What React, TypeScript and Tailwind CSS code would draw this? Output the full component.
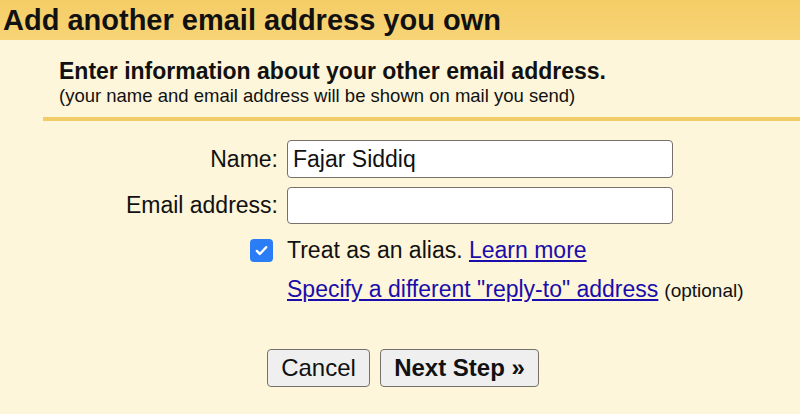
export default function App() {
  return (
    <div className="w-[800px] h-[414px] overflow-hidden bg-[#fdf6da] font-['Liberation_Sans',Arial,sans-serif] text-[#111]">
      <div className="h-[40px] bg-gradient-to-b from-[#f5cd66] to-[#f7d476] pl-[3px] flex items-center">
        <h1 className="text-[29px] font-bold leading-none">
          Add another email address you own
        </h1>
      </div>

      <div className="pl-[59px] pt-[18px]">
        <p className="text-[23px] font-bold leading-[26px]">
          Enter information about your other email address.
        </p>
        <p className="text-[18.5px] leading-[23px]">
          (your name and email address will be shown on mail you send)
        </p>
      </div>
      <div className="ml-[43px] mt-[10px] h-[4px] bg-[#f1cd6a]" />

      <div className="mt-[19px] flex flex-col gap-[9px]">
        <div className="flex items-center gap-[9px]">
          <label className="w-[278px] text-right text-[23px]">Name:</label>
          <input
            defaultValue="Fajar Siddiq"
            className="w-[386px] h-[38px] bg-white border-[1.5px] border-[#76716a] rounded-[4px] px-[5px] text-[23px] outline-none"
          />
        </div>
        <div className="flex items-center gap-[9px]">
          <label className="w-[278px] text-right text-[23px]">Email address:</label>
          <input className="w-[386px] h-[37px] bg-white border-[1.5px] border-[#76716a] rounded-[4px] px-[5px] text-[23px] outline-none" />
        </div>
      </div>

      <div className="mt-[13px] ml-[250px] h-[26px] flex items-center gap-[14px]">
        <span className="w-[23px] h-[23px] rounded-[4px] bg-[#2a7df4] flex items-center justify-center">
          <svg width="15" height="15" viewBox="0 0 16 16" fill="none">
            <path d="M3 8.5l3.2 3.2L13 4.5" stroke="white" strokeWidth="2.6" strokeLinecap="round" strokeLinejoin="round" />
          </svg>
        </span>
        <span className="text-[23px] leading-[26px]">
          Treat as an alias.{" "}
          <a href="#" className="text-[#1a0dab] underline">Learn more</a>
        </span>
      </div>

      <div className="mt-[13px] ml-[287px] h-[26px] flex items-baseline gap-[6px]">
        <a href="#" className="text-[23px] leading-[26px] text-[#1a0dab] underline">
          Specify a different "reply-to" address
        </a>
        <span className="text-[19px]">(optional)</span>
      </div>

      <div className="mt-[47px] ml-[267px] flex gap-[10px]">
        <button className="w-[103px] h-[38px] bg-[#efefef] border-[1.5px] border-[#76716a] rounded-[4px] text-[24px]">
          Cancel
        </button>
        <button className="w-[159px] h-[38px] bg-[#efefef] border-[1.5px] border-[#76716a] rounded-[4px] text-[24px] font-bold">
          Next Step »
        </button>
      </div>
    </div>
  );
}
